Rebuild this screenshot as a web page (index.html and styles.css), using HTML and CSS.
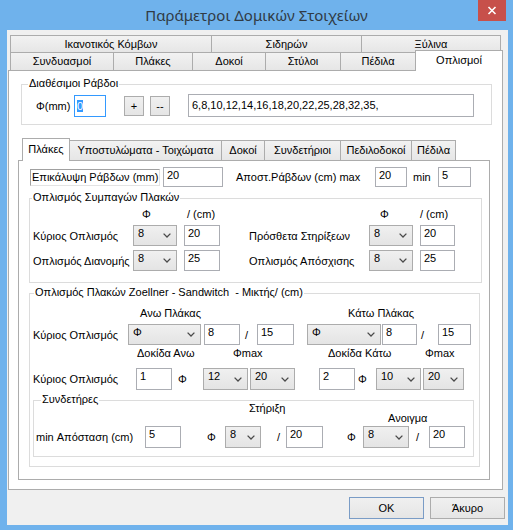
FILE: index.html
```html
<!DOCTYPE html>
<html lang="el">
<head>
<meta charset="utf-8">
<title>Παράμετροι Δομικών Στοιχείων</title>
<link rel="stylesheet" href="styles.css">
</head>
<body>
<div class="window">
  <div class="titlebar">
    <span></span>
    <div class="title">Παράμετροι Δομικών Στοιχείων</div>
    <div class="close"><svg width="10" height="9" viewBox="0 0 10 9"><path d="M1.5 1L8.5 8M8.5 1L1.5 8" stroke="#fff" stroke-width="1.6" fill="none"/></svg></div>
  </div>
  <div class="client">
    <div class="otabs">
      <div class="orow orow1">
        <div class="otab ot-a">Ικανοτικός Κόμβων</div>
        <div class="otab ot-b">Σιδηρών</div>
        <div class="otab ot-c">Ξύλινα</div>
      </div>
      <div class="orow orow2">
        <div class="otab ot-1">Συνδυασμοί</div>
        <div class="otab ot-2">Πλάκες</div>
        <div class="otab ot-3">Δοκοί</div>
        <div class="otab ot-4">Στύλοι</div>
        <div class="otab ot-5">Πέδιλα</div>
        <div class="otab ot-6 sel">Οπλισμοί</div>
      </div>
    </div>
    <div class="opanel">
      <div class="group g1">
        <span class="legend">Διαθέσιμοι Ράβδοι</span>
        <div class="g1-row">
          <span class="lbl-phimm">Φ(mm)</span>
          <div class="tb tb-focus"><span class="hl">0</span></div>
          <div class="btn sq sq1">+</div>
          <div class="btn sq sq2">--</div>
          <div class="tb tb-list">6,8,10,12,14,16,18,20,22,25,28,32,35,</div>
        </div>
      </div>

      <div class="itabs">
        <div class="itab sel it-1">Πλάκες</div>
        <div class="itab it-2">Υποστυλώματα - Τοιχώματα</div>
        <div class="itab it-3">Δοκοί</div>
        <div class="itab it-4">Συνδετήριοι</div>
        <div class="itab it-5">Πεδιλοδοκοί</div>
        <div class="itab it-6">Πέδιλα</div>
      </div>
      <div class="ipanel">
        <div class="row rowA">
          <div class="covlbl ml1 w130">Επικάλυψη Ράβδων (mm)</div>
          <div class="tb h20 ml3 w60">20</div>
          <span class="ml13 w139">Αποστ.Ράβδων (cm) max</span>
          <div class="tb h20 w32">20</div>
          <span class="ml6 w25">min</span>
          <div class="tb h20 w33">5</div>
        </div>

        <div class="group gB">
          <span class="legend">Οπλισμός Συμπαγών Πλακών</span>
          <div class="gB-grid">
            <span></span>
            <span class="hd-phi1">Φ</span>
            <span class="hd-cm1">/ (cm)</span>
            <span></span>
            <span class="hd-phi2">Φ</span>
            <span>/ (cm)</span>

            <span class="lblc">Κύριος Οπλισμός</span>
            <div class="cb w44"><span>8</span><svg class="chev" width="8" height="5" viewBox="0 0 8 5"><path d="M0.6 0.6L4 4L7.4 0.6" fill="none" stroke="#4a4a4a" stroke-width="1.3"/></svg></div>
            <div class="tb w36">20</div>
            <span>Πρόσθετα Στηρίξεων</span>
            <div class="cb w44"><span>8</span><svg class="chev" width="8" height="5" viewBox="0 0 8 5"><path d="M0.6 0.6L4 4L7.4 0.6" fill="none" stroke="#4a4a4a" stroke-width="1.3"/></svg></div>
            <div class="tb w35">20</div>

            <span class="lblc">Οπλισμός Διανομής</span>
            <div class="cb w44"><span>8</span><svg class="chev" width="8" height="5" viewBox="0 0 8 5"><path d="M0.6 0.6L4 4L7.4 0.6" fill="none" stroke="#4a4a4a" stroke-width="1.3"/></svg></div>
            <div class="tb w36">25</div>
            <span>Οπλισμός Απόσχισης</span>
            <div class="cb w44"><span>8</span><svg class="chev" width="8" height="5" viewBox="0 0 8 5"><path d="M0.6 0.6L4 4L7.4 0.6" fill="none" stroke="#4a4a4a" stroke-width="1.3"/></svg></div>
            <div class="tb w35">25</div>
          </div>
        </div>

        <div class="group gC">
          <span class="legend">Οπλισμός Πλακών Zoellner - Sandwitch&nbsp; - Μικτής/ (cm)</span>
          <div class="cap capC1">
            <span class="ml110 w208">Ανω Πλάκας</span>
            <span>Κάτω Πλάκας</span>
          </div>
          <div class="row rowC1">
            <span class="ml3 w95">Κύριος Οπλισμός</span>
            <div class="cb w73"><span>Φ</span><svg class="chev" width="8" height="5" viewBox="0 0 8 5"><path d="M0.6 0.6L4 4L7.4 0.6" fill="none" stroke="#4a4a4a" stroke-width="1.3"/></svg></div>
            <div class="tb ml3 w36">8</div>
            <span class="ml5 w12">/</span>
            <div class="tb w37">15</div>
            <div class="cb ml13 w74"><span>Φ</span><svg class="chev" width="8" height="5" viewBox="0 0 8 5"><path d="M0.6 0.6L4 4L7.4 0.6" fill="none" stroke="#4a4a4a" stroke-width="1.3"/></svg></div>
            <div class="tb ml1 w35">8</div>
            <span class="ml4 w17">/</span>
            <div class="tb w33">15</div>
          </div>
          <div class="cap capC2">
            <span class="ml107 w96">Δοκίδα Ανω</span>
            <span class="w95">Φmax</span>
            <span class="w97">Δοκίδα Κάτω</span>
            <span>Φmax</span>
          </div>
          <div class="row rowC2">
            <span class="ml3 w103">Κύριος Οπλισμός</span>
            <div class="tb h22 w36">1</div>
            <span class="ml6 w25">Φ</span>
            <div class="cb h22 w45"><span>12</span><svg class="chev" width="8" height="5" viewBox="0 0 8 5"><path d="M0.6 0.6L4 4L7.4 0.6" fill="none" stroke="#4a4a4a" stroke-width="1.3"/></svg></div>
            <div class="cb h22 ml2 w45"><span>20</span><svg class="chev" width="8" height="5" viewBox="0 0 8 5"><path d="M0.6 0.6L4 4L7.4 0.6" fill="none" stroke="#4a4a4a" stroke-width="1.3"/></svg></div>
            <div class="tb h22 ml24 w36">2</div>
            <span class="ml3 w18">Φ</span>
            <div class="cb h22 w45"><span>10</span><svg class="chev" width="8" height="5" viewBox="0 0 8 5"><path d="M0.6 0.6L4 4L7.4 0.6" fill="none" stroke="#4a4a4a" stroke-width="1.3"/></svg></div>
            <div class="cb h22 ml2 w41"><span>20</span><svg class="chev" width="8" height="5" viewBox="0 0 8 5"><path d="M0.6 0.6L4 4L7.4 0.6" fill="none" stroke="#4a4a4a" stroke-width="1.3"/></svg></div>
          </div>

          <div class="group gD">
            <span class="legend">Συνδετήρες</span>
            <div class="capD">
              <span class="cap-top ml215 w139">Στήριξη</span>
              <span class="cap-bot">Ανοιγμα</span>
            </div>
            <div class="row rowD">
              <span class="ml2 w109">min Απόσταση (cm)</span>
              <div class="tb h22 w36">5</div>
              <span class="ml26 w18">Φ</span>
              <div class="cb h22 w36"><span>8</span><svg class="chev" width="8" height="5" viewBox="0 0 8 5"><path d="M0.6 0.6L4 4L7.4 0.6" fill="none" stroke="#4a4a4a" stroke-width="1.3"/></svg></div>
              <span class="ml16 w9">/</span>
              <div class="tb h22 w37">20</div>
              <span class="ml24 w16">Φ</span>
              <div class="cb h22 w46"><span>8</span><svg class="chev" width="8" height="5" viewBox="0 0 8 5"><path d="M0.6 0.6L4 4L7.4 0.6" fill="none" stroke="#4a4a4a" stroke-width="1.3"/></svg></div>
              <span class="ml7 w13">/</span>
              <div class="tb h22 w36">20</div>
            </div>
          </div>
        </div>
      </div>
    </div>
    <div class="buttons">
      <div class="btn dlg dlg-default">OK</div>
      <div class="btn dlg">Άκυρο</div>
    </div>
  </div>
</div>
</body>
</html>
```
FILE: styles.css
```css
* { box-sizing: border-box; }
html, body { margin: 0; padding: 0; }
body {
  width: 513px;
  height: 530px;
  overflow: hidden;
  background: #6fb2ec;
  font-family: "Liberation Sans", Arial, sans-serif;
  font-size: 11px;
  color: #000;
}
.window { display: flex; flex-direction: column; width: 513px; height: 530px; }

/* title bar */
.titlebar { height: 30px; flex: none; display: grid; grid-template-columns: 1fr auto 1fr; align-items: start; }
.title {
  font-family: "Noto Sans", "Open Sans", sans-serif;
  font-size: 15px;
  line-height: 30px;
  color: #303a44;
  white-space: nowrap;
}
.close {
  justify-self: end;
  width: 28px;
  height: 21px;
  margin-right: 7px;
  background: #c7504b;
  display: flex;
  align-items: center;
  justify-content: center;
}

/* client area */
.client {
  flex: 1;
  margin: 0 5px 5px 7px;
  background: #f0f0f0;
  padding: 5px 3px 0 1px;
}

/* outer tabs */
.otabs { margin-left: 2px; }
.orow { display: flex; }
.orow1 { height: 17px; }
.orow2 { height: 18px; align-items: flex-end; }
.otab {
  height: 100%;
  border: 1px solid #acacac;
  border-bottom: 0;
  margin-left: -1px;
  background: linear-gradient(#f2f2f2, #e6e6e6);
  text-align: center;
  white-space: nowrap;
  line-height: 16px;
}
.orow2 .otab { line-height: 17px; }
.otab:first-child { margin-left: 0; }
.ot-a { width: 202px; }
.ot-b { width: 151px; }
.ot-c { width: 140px; }
.ot-1 { width: 104px; }
.ot-2 { width: 80px; }
.ot-3 { width: 74px; }
.ot-4 { width: 76px; }
.ot-5 { width: 76px; }
.ot-6 { width: 88px; }
.orow2 .otab.sel {
  height: 21px;
  margin-bottom: -1px;
  background: #fff;
  position: relative;
  z-index: 1;
  line-height: 18px;
}

.opanel {
  width: 495px;
  height: 420px;
  border: 1px solid #acacac;
  background: #fff;
  padding: 13px 0 0 9px;
}

/* group boxes */
.group { position: relative; border: 1px solid #dcdcdc; }
.legend {
  position: absolute;
  top: -9px;
  line-height: 14px;
  padding: 0 1px;
  background: #fff;
  white-space: nowrap;
}
.g1 { margin-left: 3px; width: 471px; height: 41px; padding-top: 9px; }
.g1 .legend { left: 6px; }
.g1-row { display: flex; align-items: center; height: 23px; }
.lbl-phimm { margin-left: 14px; width: 38px; }

/* controls */
.tb {
  flex: none;
  height: 21px;
  border: 1px solid #abadb3;
  background: #fff;
  padding: 0 3px;
  line-height: 15px;
  white-space: nowrap;
}
.tb-focus { width: 32px; height: 22px; border-color: #3399ff; padding: 0 2px; line-height: 20px; }
.hl { background: #3399ff; color: #fff; }
.tb-list { margin-left: 18px; width: 286px; height: 23px; line-height: 21px; }
.btn {
  flex: none;
  border: 1px solid #acacac;
  background: linear-gradient(#f0f0f0, #e5e5e5);
  display: flex;
  align-items: center;
  justify-content: center;
}
.sq { width: 20px; height: 20px; }
.sq1 { margin-left: 18px; }
.sq2 { margin-left: 6px; }

.cb {
  flex: none;
  height: 21px;
  border: 1px solid #acacac;
  background: linear-gradient(#f0f0f0, #e4e4e4);
  display: flex;
  justify-content: space-between;
  align-items: center;
  padding: 0 5px 0 4px;
}
.cb span { align-self: flex-start; line-height: 15px; }
.chev { flex: none; }

/* inner tabs */
.itabs { display: flex; align-items: flex-end; height: 20px; margin: 15px 0 0 4px; }
.itab {
  height: 20px;
  border: 1px solid #acacac;
  border-bottom: 0;
  margin-left: -1px;
  background: linear-gradient(#f2f2f2, #e6e6e6);
  text-align: center;
  white-space: nowrap;
  line-height: 19px;
}
.itab.sel {
  height: 23px;
  margin-left: 0;
  margin-bottom: -1px;
  background: #fff;
  position: relative;
  z-index: 1;
  line-height: 21px;
}
.it-1 { width: 48px; }
.it-2 { width: 153px; }
.it-3 { width: 44px; }
.it-4 { width: 77px; }
.it-5 { width: 72px; }
.it-6 { width: 45px; }

.ipanel {
  width: 472px;
  height: 320px;
  border: 1px solid #acacac;
  background: #fff;
  padding-left: 10px;
}

.row { display: flex; align-items: center; white-space: nowrap; }
.row > span { flex: none; }
.rowA { height: 20px; margin-top: 6px; }
.covlbl {
  flex: none;
  height: 17px;
  line-height: 14px;
  padding-left: 1px;
  border-top: 1px solid #a0a0a0;
  border-left: 1px solid #a0a0a0;
  border-right: 1px solid #e3e3e3;
  border-bottom: 1px solid #e3e3e3;
  white-space: nowrap;
}

/* group: solid slabs */
.gB { margin-top: 11px; width: 453px; height: 85px; }
.gB .legend { left: 2px; }
.gB-grid {
  display: grid;
  grid-template-columns: 103px 51px 65px 120px 51px 36px;
  grid-template-rows: 14px 21px 21px;
  row-gap: 4px;
  padding-top: 8px;
  align-items: center;
  white-space: nowrap;
}
.gB-grid > span { line-height: 14px; }
.lblc { padding-left: 3px; }
.hd-phi1 { padding-left: 9px; }
.hd-cm1 { padding-left: 3px; }
.hd-phi2 { padding-left: 11px; }

/* group: zoellner */
.gC { margin-top: 10px; width: 451px; height: 174px; padding-top: 12px; }
.gC .legend { left: 4px; }
.cap { display: flex; height: 14px; line-height: 14px; white-space: nowrap; }
.cap > span { flex: none; }
.rowC1 { height: 21px; margin-top: 4px; }
.capC2 { margin-top: 1px; }
.rowC2 { height: 22px; margin-top: 8px; }

/* group: stirrups */
.gD { margin: 10px 0 0 3px; width: 441px; height: 57px; }
.gD .legend { left: 7px; }
.capD { display: flex; height: 24px; white-space: nowrap; }
.capD > span { flex: none; line-height: 14px; }
.cap-top { align-self: flex-start; }
.cap-bot { align-self: flex-end; }
.rowD { height: 22px; margin-top: 1px; }

.h20 { height: 20px; }
.h22 { height: 22px; }

/* bottom buttons */
.buttons { display: flex; justify-content: flex-end; gap: 6px; margin-top: 7px; }
.dlg { width: 75px; height: 22px; }
.dlg-default { border-color: #7a9cc6; }

/* spacing helpers */
.ml1 { margin-left: 1px; }
.ml2 { margin-left: 2px; }
.ml3 { margin-left: 3px; }
.ml4 { margin-left: 4px; }
.ml5 { margin-left: 5px; }
.ml6 { margin-left: 6px; }
.ml7 { margin-left: 7px; }
.ml13 { margin-left: 13px; }
.ml16 { margin-left: 16px; }
.ml24 { margin-left: 24px; }
.ml26 { margin-left: 26px; }
.ml107 { margin-left: 107px; }
.ml110 { margin-left: 110px; }
.ml215 { margin-left: 215px; }

.w9 { width: 9px; }
.w12 { width: 12px; }
.w13 { width: 13px; }
.w16 { width: 16px; }
.w17 { width: 17px; }
.w18 { width: 18px; }
.w25 { width: 25px; }
.w32 { width: 32px; }
.w33 { width: 33px; }
.w35 { width: 35px; }
.w36 { width: 36px; }
.w37 { width: 37px; }
.w41 { width: 41px; }
.w44 { width: 44px; }
.w45 { width: 45px; }
.w46 { width: 46px; }
.w60 { width: 60px; }
.w73 { width: 73px; }
.w74 { width: 74px; }
.w95 { width: 95px; }
.w96 { width: 96px; }
.w97 { width: 97px; }
.w103 { width: 103px; }
.w109 { width: 109px; }
.w130 { width: 130px; }
.w139 { width: 139px; }
.w208 { width: 208px; }
```
